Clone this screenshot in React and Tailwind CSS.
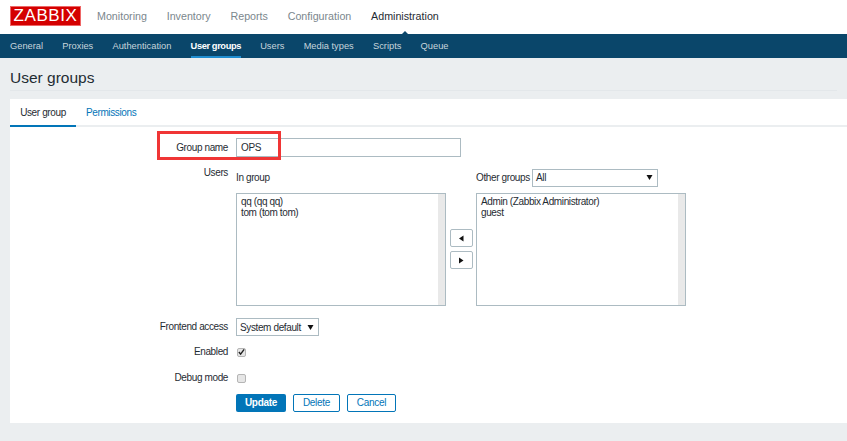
const font = { fontFamily: '"Liberation Sans", Arial, sans-serif' };

function Arrow({ dir }) {
  const d = { down: "M0.5 1H6.5L3.5 6Z", left: "M5.5 0.5V6.5L1 3.5Z", right: "M1 0.5V6.5L5.5 3.5Z" }[dir];
  return (
    <svg width="7" height="7" viewBox="0 0 7 7" className="shrink-0">
      <path d={d} fill="#111" />
    </svg>
  );
}

function ListBox({ items }) {
  return (
    <div className="w-[210px] h-[113px] border border-[#acbbc2] bg-white flex">
      <div className="flex-1 pl-1 pt-[3px] text-[10px] tracking-[-0.38px] leading-[10.5px] text-[#1f2c33]">
        {items.map((i) => (
          <div key={i}>{i}</div>
        ))}
      </div>
      <div className="w-[7px] bg-[#e9e9e9]" />
    </div>
  );
}

function Label({ children, className = "" }) {
  return <div className={"w-[228px] text-right text-[10px] tracking-[-0.38px] leading-[14px] text-[#1f2c33] " + className}>{children}</div>;
}

function Row({ label, className = "", children }) {
  return (
    <div className={"flex items-center gap-2 " + className}>
      <Label>{label}</Label>
      {children}
    </div>
  );
}

function SmallBtn({ dir }) {
  return (
    <div className="w-[23px] h-[18px] border border-[#acbbc2] rounded-[2px] bg-white flex items-center justify-center">
      <Arrow dir={dir} />
    </div>
  );
}

export default function App() {
  return (
    <div style={font} className="w-[847px] h-[441px] overflow-hidden bg-[#ebeef0] relative">
      <header className="h-[34px] pb-[2px] bg-white flex items-center pl-[10px]">
        <div className="w-[71px] h-[20px] bg-[#d40000] border border-[#e66] text-white text-[17px] leading-[18px] tracking-[0.6px] flex items-center justify-center">
          ZABBIX
        </div>
        <nav className="flex ml-[16px] gap-[19.8px] text-[10.7px] text-[#7b878d]">
          <span>Monitoring</span>
          <span>Inventory</span>
          <span>Reports</span>
          <span>Configuration</span>
          <span className="text-[#1f2c33] relative">
            Administration
            <span className="absolute left-1/2 -translate-x-1/2 -bottom-[12px] w-0 h-0 border-x-[5px] border-x-transparent border-b-[5px] border-b-[#0a466a]" />
          </span>
        </nav>
      </header>
      <nav className="h-[24px] bg-[#0a466a] flex pl-[10px] gap-[19.2px] text-[9.3px] text-[#c7d5dc]">
        <span className="leading-[25px]">General</span>
        <span className="leading-[25px]">Proxies</span>
        <span className="leading-[25px]">Authentication</span>
        <span className="leading-[25px] text-white font-bold tracking-[-0.4px] h-[24px] border-b-2 border-[#1f8dd0]">User groups</span>
        <span className="leading-[25px]">Users</span>
        <span className="leading-[25px]">Media types</span>
        <span className="leading-[25px]">Scripts</span>
        <span className="leading-[25px]">Queue</span>
      </nav>
      <div className="mx-[10px] h-[33px] pt-[7px] flex items-center border-b border-[#e3e7ea] text-[15.5px] text-[#1f2c33]">
        User groups
      </div>
      <main className="ml-[10px] mt-[8px] h-[324px] bg-white relative">
        <div className="flex h-[28px] border-b-2 border-[#ebeef0] text-[10px] tracking-[-0.38px]">
          <div className="w-[66px] h-[28px] border-b-[2px] border-[#0275b8] text-center leading-[28px] text-[#1f2c33]">User group</div>
          <div className="pl-[10px] leading-[28px] text-[#0275b8]">Permissions</div>
        </div>
        <div className="-ml-[10px] pt-[11px]">
          <Row label="Group name">
            <div className="w-[225px] h-[19px] border border-[#acbbc2] pl-1 text-[10px] tracking-[-0.38px] leading-[17px] text-[#1f2c33]">OPS</div>
          </Row>
          <div className="flex gap-2 mt-[11px]">
            <Label className="-mt-[2px]">Users</Label>
            <div className="w-[450px]">
              <div className="flex h-[19px] items-center text-[10px] tracking-[-0.38px] text-[#1f2c33]">
                <span className="w-[240px]">In group</span>
                <span className="w-[56px]">Other groups</span>
                <div className="w-[126px] h-[18px] pb-[1px] border border-[#acbbc2] flex items-center justify-between pl-[3px] pr-[4px]">
                  <span>All</span>
                  <Arrow dir="down" />
                </div>
              </div>
              <div className="flex mt-[6px]">
                <ListBox items={["qq (qq qq)", "tom (tom tom)"]} />
                <div className="w-[30px] flex flex-col items-center pt-[36px] gap-[4px]">
                  <SmallBtn dir="left" />
                  <SmallBtn dir="right" />
                </div>
                <ListBox items={["Admin (Zabbix Administrator)", "guest"]} />
              </div>
            </div>
          </div>
          <Row label="Frontend access" className="mt-[12px]">
            <div className="w-[83px] h-[18px] border border-[#acbbc2] flex items-center justify-between pl-[3px] pr-[4px] text-[10px] tracking-[-0.38px] whitespace-nowrap text-[#1f2c33]">
              <span>System default</span>
              <Arrow dir="down" />
            </div>
          </Row>
          <Row label="Enabled" className="mt-[9px]">
            <div className="w-[9px] h-[9px] ml-[1px] rounded-[2px] border border-[#b5b5b5] bg-[#e6e6e6] flex items-center justify-center">
              <svg width="8" height="8" viewBox="0 0 8 8">
                <path d="M1 4L3 6.5L7 1" stroke="#222" strokeWidth="1.6" fill="none" />
              </svg>
            </div>
          </Row>
          <Row label="Debug mode" className="mt-[12px]">
            <div className="w-[9px] h-[9px] ml-[1px] rounded-[2px] border border-[#b5b5b5] bg-[#e6e6e6]" />
          </Row>
          <div className="flex ml-[236px] mt-[9px] gap-[7px] text-[10px] tracking-[-0.3px]">
            <div className="w-[50px] h-[18px] bg-[#0275b8] rounded-[2px] text-white font-bold text-center leading-[18px]">Update</div>
            <div className="w-[47px] h-[18px] border border-[#0275b8] rounded-[2px] text-[#0275b8] text-center leading-[16px]">Delete</div>
            <div className="w-[49px] h-[18px] border border-[#0275b8] rounded-[2px] text-[#0275b8] text-center leading-[16px]">Cancel</div>
          </div>
        </div>
      </main>
      <div className="absolute left-[157px] top-[131px] w-[124px] h-[29px] border-[3px] border-[#f03535]" />
    </div>
  );
}
